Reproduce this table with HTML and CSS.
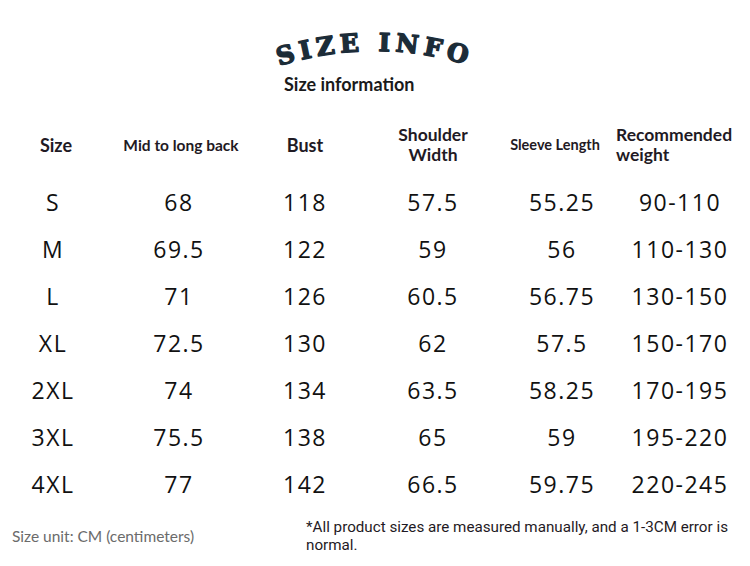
FILE: index.html
```html
<!DOCTYPE html>
<html>
<head>
<meta charset="utf-8">
<link rel="stylesheet" href="styles.css">
</head>
<body>
<div class="page">
  <svg class="title-arc" width="750" height="74" viewBox="0 0 750 74">
    <defs>
      <path id="arc" d="M276,67 Q375,35 474,67"/>
    </defs>
    <text class="arc-text">
      <textPath href="#arc" startOffset="50%" text-anchor="middle">SIZE INFO</textPath>
    </text>
  </svg>
  <div class="subtitle-wrap"><div class="subtitle">Size information</div></div>

  <div class="table">
    <div class="row head">
      <div class="cell h-size">Size</div>
      <div class="cell h-mid">Mid to long back</div>
      <div class="cell h-bust">Bust</div>
      <div class="cell h-shoulder">Shoulder<br>Width</div>
      <div class="cell h-sleeve">Sleeve Length</div>
      <div class="cell h-weight">Recommended<br>weight</div>
    </div>
    <div class="rows">
      <div class="row data"><div class="cell">S</div><div class="cell">68</div><div class="cell">118</div><div class="cell">57.5</div><div class="cell">55.25</div><div class="cell">90-110</div></div>
      <div class="row data"><div class="cell">M</div><div class="cell">69.5</div><div class="cell">122</div><div class="cell">59</div><div class="cell">56</div><div class="cell">110-130</div></div>
      <div class="row data"><div class="cell">L</div><div class="cell">71</div><div class="cell">126</div><div class="cell">60.5</div><div class="cell">56.75</div><div class="cell">130-150</div></div>
      <div class="row data"><div class="cell">XL</div><div class="cell">72.5</div><div class="cell">130</div><div class="cell">62</div><div class="cell">57.5</div><div class="cell">150-170</div></div>
      <div class="row data"><div class="cell">2XL</div><div class="cell">74</div><div class="cell">134</div><div class="cell">63.5</div><div class="cell">58.25</div><div class="cell">170-195</div></div>
      <div class="row data"><div class="cell">3XL</div><div class="cell">75.5</div><div class="cell">138</div><div class="cell">65</div><div class="cell">59</div><div class="cell">195-220</div></div>
      <div class="row data"><div class="cell">4XL</div><div class="cell">77</div><div class="cell">142</div><div class="cell">66.5</div><div class="cell">59.75</div><div class="cell">220-245</div></div>
    </div>
  </div>

  <div class="footer">
    <div class="unit">Size unit: CM (centimeters)</div>
    <div class="note">*All product sizes are measured manually, and a 1-3CM error is<br>normal.</div>
  </div>
</div>
</body>
</html>
```

FILE: styles.css
```css
html, body {
  margin: 0;
  padding: 0;
  background: #ffffff;
}
.page {
  width: 750px;
  height: 566px;
  overflow: hidden;
  font-family: "Lato", "Open Sans", sans-serif;
}
.title-arc {
  display: block;
}
.arc-text {
  font-family: "DejaVu Serif", serif;
  font-weight: bold;
  font-size: 25px;
  letter-spacing: 5px;
  fill: #1c2c38;
  stroke: #1c2c38;
  stroke-width: 1.4px;
  stroke-linejoin: round;
}
.subtitle-wrap {
  width: 186px;
  margin: 0 auto;
}
.subtitle {
  font-weight: bold;
  font-size: 18px;
  line-height: 20px;
  color: #1a1a1a;
  padding-left: 2px;
}
.table {
  margin-top: 26px;
}
.row {
  display: grid;
  grid-template-columns: 106px 146px 106px 150px 108px 128px;
  align-items: center;
}
.row .cell {
  text-align: center;
}
.head {
  height: 50px;
  color: #1f1a24;
  font-weight: bold;
  line-height: 20px;
}
.h-size { font-size: 18px; padding-left: 6px; }
.h-mid { font-size: 15.5px; padding-left: 4px; }
.h-bust { font-size: 18px; }
.h-shoulder { font-size: 17.5px; }
.h-sleeve { font-size: 14.5px; padding-right: 14px; }
.head .h-weight { font-size: 17.5px; text-align: left; }
.rows {
  margin-top: 8px;
}
.data {
  height: 47px;
  font-family: "Open Sans", sans-serif;
  font-size: 23px;
  letter-spacing: 1.5px;
  color: #111111;
}
.footer {
  display: flex;
  align-items: center;
  margin-top: 11px;
}
.unit {
  width: 306px;
  padding-left: 12px;
  box-sizing: border-box;
  font-size: 15.5px;
  color: #6b6b6b;
  white-space: nowrap;
}
.note {
  font-family: "Roboto", sans-serif;
  font-size: 15.2px;
  line-height: 18px;
  color: #1f1a24;
  white-space: nowrap;
}
```
